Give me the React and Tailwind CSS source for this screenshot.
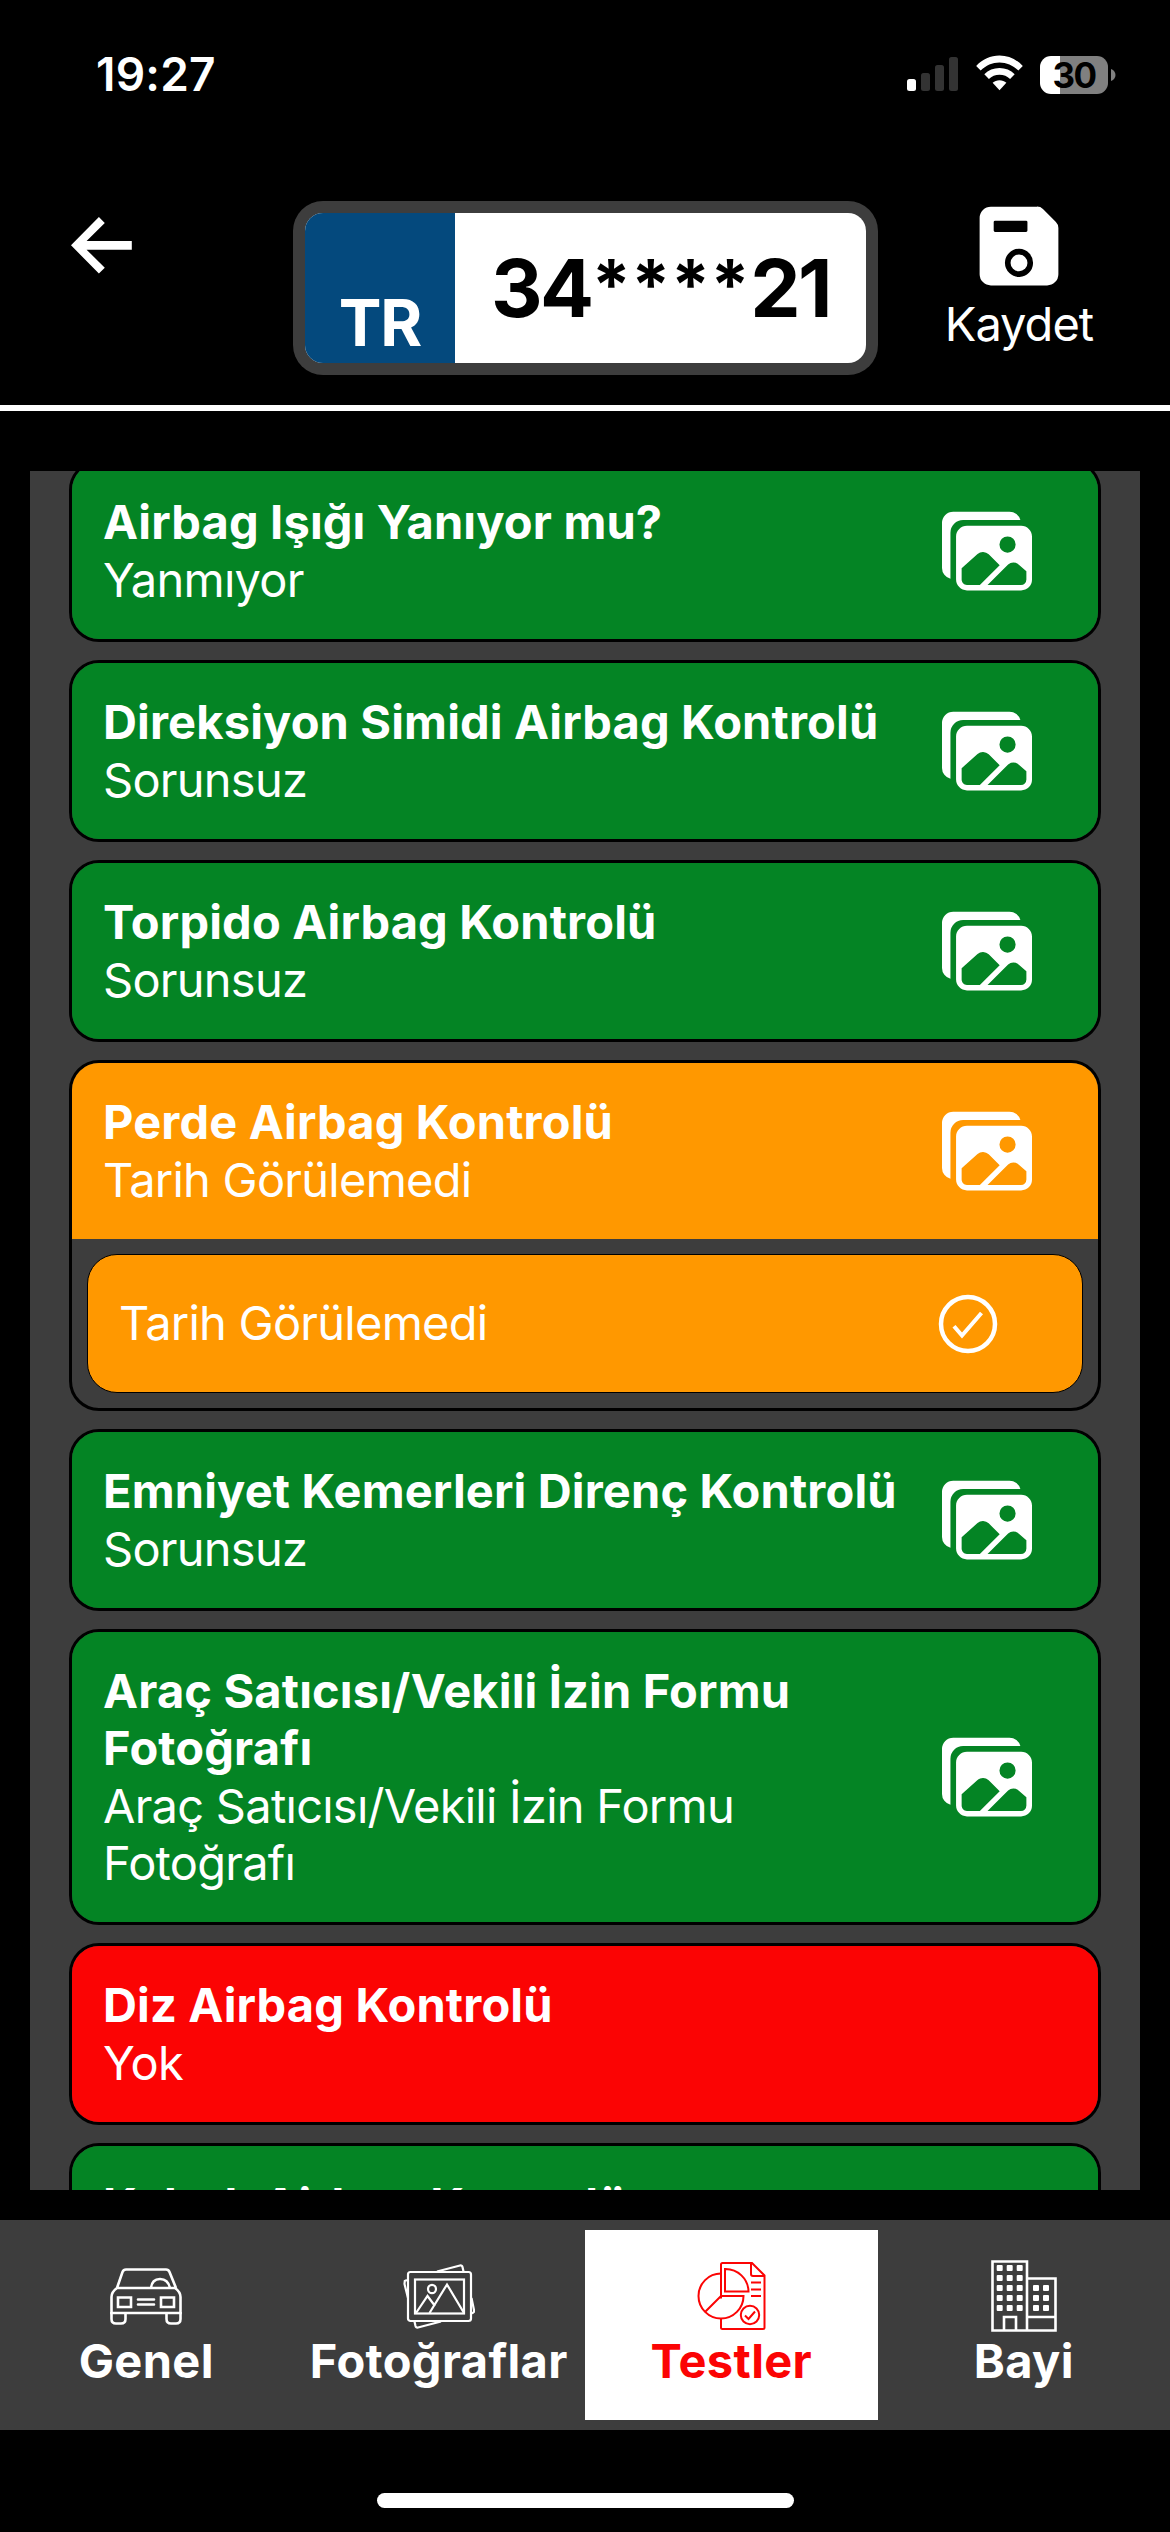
import React from "react";
import { IoImages, IoSave } from "react-icons/io5";

const GREEN = "bg-[#048424]";
const ORANGE = "bg-[#ff9800]";
const RED = "bg-[#fb0404]";

const tests = [
  { title: "Airbag Işığı Yanıyor mu?", value: "Yanmıyor", color: GREEN, height: "h-[182px]", images: true },
  { title: "Direksiyon Simidi Airbag Kontrolü", value: "Sorunsuz", color: GREEN, height: "h-[182px]", images: true },
  { title: "Torpido Airbag Kontrolü", value: "Sorunsuz", color: GREEN, height: "h-[182px]", images: true },
  { title: "Perde Airbag Kontrolü", value: "Tarih Görülemedi", color: ORANGE, height: "h-[351px]", images: true, option: "Tarih Görülemedi" },
  { title: "Emniyet Kemerleri Direnç Kontrolü", value: "Sorunsuz", color: GREEN, height: "h-[182px]", images: true },
  { title: "Araç Satıcısı/Vekili İzin Formu Fotoğrafı", value: "Araç Satıcısı/Vekili İzin Formu Fotoğrafı", color: GREEN, height: "h-[296px]", images: true },
  { title: "Diz Airbag Kontrolü", value: "Yok", color: RED, height: "h-[182px]", images: false },
  { title: "Koltuk Airbag Kontrolü", color: GREEN, height: "h-[182px]", images: false },
];

function StatusBar() {
  return (
    <div className="flex h-[150px] shrink-0 items-start justify-between pl-[96px] pr-[54px]">
      <span className="pt-[45px] text-[46px] font-semibold leading-[58px] tracking-[0.2px]">19:27</span>
      <div className="flex items-center pt-[55px]">
        <svg width="52" height="40" viewBox="0 0 52 40">
          <rect x="0" y="24" width="9" height="12" rx="2.5" fill="#fff" />
          <rect x="14" y="18" width="9" height="18" rx="2.5" fill="#333" />
          <rect x="28" y="10" width="9" height="26" rx="2.5" fill="#333" />
          <rect x="42" y="2" width="9" height="34" rx="2.5" fill="#333" />
        </svg>
        <svg className="ml-[16px]" width="49" height="40" viewBox="0 0 50 40">
          <path d="M1.2 10.8C7.500 4 16 0.200 25 0.200S42.500 4 48.800 10.800L44.200 15.500C39 10.300 32.200 7.300 25 7.300S11 10.300 5.800 15.500Z" fill="#fff" />
          <path d="M9.500 19.200C13.600 15.200 19 12.900 25 12.900S36.400 15.200 40.500 19.200L35.800 24C33 21.300 29.200 19.700 25 19.700S17 21.300 14.200 24Z" fill="#fff" />
          <path d="M18 27.800C19.900 26.200 22.300 25.300 25 25.300S30.100 26.200 32 27.800L25 35.600Z" fill="#fff" />
        </svg>
        <div className="ml-[16px] flex h-[38px] w-[68px] items-center justify-center rounded-[11px] bg-[linear-gradient(90deg,#fff_20px,#808080_20px)]">
          <span className="text-[35px] font-bold leading-[38px] tracking-[-1.5px] text-black">30</span>
        </div>
        <svg className="ml-[3px]" width="5" height="12" viewBox="0 0 5 12">
          <path d="M0 0C3 1 4.500 3.500 4.500 6S3 11 0 12Z" fill="#808080" />
        </svg>
      </div>
    </div>
  );
}

function Header() {
  return (
    <header className="flex h-[261px] shrink-0 items-start border-b-[6px] border-white pl-[71px] pr-[70px]">
      <svg className="mt-[66px] shrink-0" width="62" height="58" viewBox="0 0 62 58">
        <path d="M0 29.300L27.900 1 33.800 7 15.600 25H60.800V33.700H15.600L33.800 51.700 27.900 57.500Z" fill="#fff" />
      </svg>
      <div className="ml-[160px] mt-[51px] flex h-[174px] w-[585px] shrink-0 rounded-[30px] bg-[#3d3d3d] p-[12px]">
        <div className="flex w-full overflow-hidden rounded-[18px] bg-white">
          <div className="flex w-[150px] items-end justify-center bg-[#04497d]">
            <span className="text-[64px] font-bold leading-[80px] tracking-[-1px]">TR</span>
          </div>
          <div className="flex flex-1 items-center justify-center text-[80px] font-bold leading-[96px] tracking-[-2.5px] text-black">
            <span className="whitespace-nowrap">
              34<span className="align-[7px] text-[70px] leading-none tracking-[0.5px]">****</span>21
            </span>
          </div>
        </div>
      </div>
      <div className="ml-[61px] mt-[51px] flex w-[160px] flex-col items-center">
        <IoSave size={90} />
        <span className="mt-[4px] text-[47px] leading-[58px] tracking-[-1px]">Kaydet</span>
      </div>
    </header>
  );
}

function TestCard({ test }) {
  return (
    <div className={`flex shrink-0 flex-col overflow-hidden rounded-[30px] border-[3px] border-black ${test.height}`}>
      <div className={`flex items-center justify-between pl-[31px] pr-[66px] ${test.color} ${test.option ? "h-[176px]" : "flex-1"}`}>
        <div className="flex w-[820px] flex-col gap-px self-start pt-[30px] text-[47px] leading-[57px]">
          <div className="font-bold tracking-[0.15px]">{test.title}</div>
          {test.value && <div className="tracking-[-0.75px]">{test.value}</div>}
        </div>
        {test.images && <IoImages size={90} className="shrink-0" />}
      </div>
      {test.option && (
        <div className={`mx-[15px] mt-[15px] flex h-[139px] items-center justify-between rounded-[30px] border border-black pl-[31px] pr-[84px] ${test.color}`}>
          <span className="-mt-px text-[47px] leading-[58px] tracking-[-0.75px]">{test.option}</span>
          <svg width="60" height="60" viewBox="0 0 60 60" fill="none" stroke="#fff">
            <circle cx="30" cy="30" r="27" strokeWidth="4.500" />
            <path d="M16 32.200L24 41.500 43.500 19" strokeWidth="4" />
          </svg>
        </div>
      )}
    </div>
  );
}

function CarIcon() {
  return (
    <svg width="72" height="72" viewBox="0 0 72 72" fill="none" stroke="currentColor" strokeWidth="2.600">
      <path d="M7 28L12.500 12Q13.500 9.500 16 9.500H56Q58.500 9.500 59.500 12L66 28M7 28H65Q70.500 32 70.500 37V53H1.500V37Q1.500 32 7 28Z" />
      <path d="M41 28Q42 19 50 19T60 28" />
      <path d="M1.500 52V59Q1.500 63.500 6 63.500H11Q15.500 63.500 15.500 59V53M56.500 53V59Q56.500 63.500 61 63.500H66Q70.500 63.500 70.500 59V52" />
      <path d="M8 37.500H21V47H8ZM51 37.500H64V47H51Z" />
      <path d="M28 39.500H44M28 44.500H44" strokeLinecap="round" />
    </svg>
  );
}

function PhotosIcon() {
  return (
    <svg width="72" height="72" viewBox="0 0 72 72" fill="none" stroke="currentColor" strokeWidth="2.200">
      <rect x="5" y="12" width="63" height="49" rx="2.500" />
      <rect x="12" y="19.500" width="49" height="34" />
      <path d="M13 53L24.500 36 32 46 M26.500 53L44 24.500 61 53" />
      <ellipse cx="29" cy="29" rx="4" ry="4.200" />
      <path d="M34 11.500L57 5.500Q59 5 59.500 7L60.500 11.500M4 20L1.800 21 1.500 24 5 38M68.500 38L71 50Q71.500 53 68 53.500M38 61.500L15 67.500Q13 68 12.500 66L11.500 61.500" />
    </svg>
  );
}

function ReportIcon() {
  return (
    <svg width="72" height="72" viewBox="0 0 72 72" fill="none" stroke="currentColor" strokeWidth="2">
      <path d="M26 38.500V4.500Q26 3 27.500 3H57L69.500 15.500V67.500Q69.500 69 68 69H27.500Q26 69 26 67.500V58.500" />
      <path d="M56 3V14Q56 16 58 16H69.500" />
      <path d="M26 13.500A22.500 22.500 0 1 0 48.500 36H26L10.500 51.500" />
      <path d="M30 9V31.500H53.500A23 23 0 0 0 30 9Z" />
      <path d="M56 22.500H66M56 29.500H66M56 36H66" />
      <circle cx="55" cy="55" r="9.200" />
      <path d="M50 55.500L53.500 59 60 51.500" />
    </svg>
  );
}

function BuildingIcon() {
  const tall = [5.7, 15.7, 25.7].flatMap((x) => [5, 15, 25, 35, 45].map((y) => [x, y]));
  const low = [42, 52].flatMap((x) => [25, 35, 45].map((y) => [x, y]));
  return (
    <svg width="66" height="72" viewBox="0 0 66 72" fill="none" stroke="currentColor" strokeWidth="2.600">
      <path d="M1.500 1.500H36V70.500H1.500ZM36 18.500H64.500V70.500H36M36 57H64.500M13 70V57H25V70" />
      {[...tall, ...low].map(([x, y]) => (
        <rect key={`${x}-${y}`} x={x} y={y} width="6" height="6" rx="1" fill="currentColor" stroke="none" />
      ))}
    </svg>
  );
}

const tabs = [
  { label: "Genel", Icon: CarIcon },
  { label: "Fotoğraflar", Icon: PhotosIcon },
  { label: "Testler", Icon: ReportIcon, active: true },
  { label: "Bayi", Icon: BuildingIcon },
];

function TabBar() {
  return (
    <nav className="mt-[30px] grid h-[210px] shrink-0 grid-cols-4 bg-[#3d3d3d] py-[10px]">
      {tabs.map(({ label, Icon, active }) => (
        <div key={label} className={`flex flex-col items-center pt-[30px] ${active ? "bg-white text-[#fb0404]" : "text-white"}`}>
          <Icon />
          <span className="text-[47px] font-bold leading-[58px] tracking-[0.35px]">{label}</span>
        </div>
      ))}
    </nav>
  );
}

export default function App() {
  return (
    <div className="flex h-[2532px] w-[1170px] flex-col overflow-hidden bg-black font-['Inter','Liberation_Sans',sans-serif] text-white">
      <StatusBar />
      <Header />
      <main className="mx-[30px] mt-[60px] h-[1719px] shrink-0 overflow-hidden bg-[#3d3d3d] px-[39px]">
        <div className="-mt-[11px] flex flex-col gap-[18px]">
          {tests.map((test) => (
            <TestCard key={test.title} test={test} />
          ))}
        </div>
      </main>
      <TabBar />
      <div className="mx-auto mt-[63px] h-[15px] w-[417px] shrink-0 rounded-full bg-white" />
    </div>
  );
}
